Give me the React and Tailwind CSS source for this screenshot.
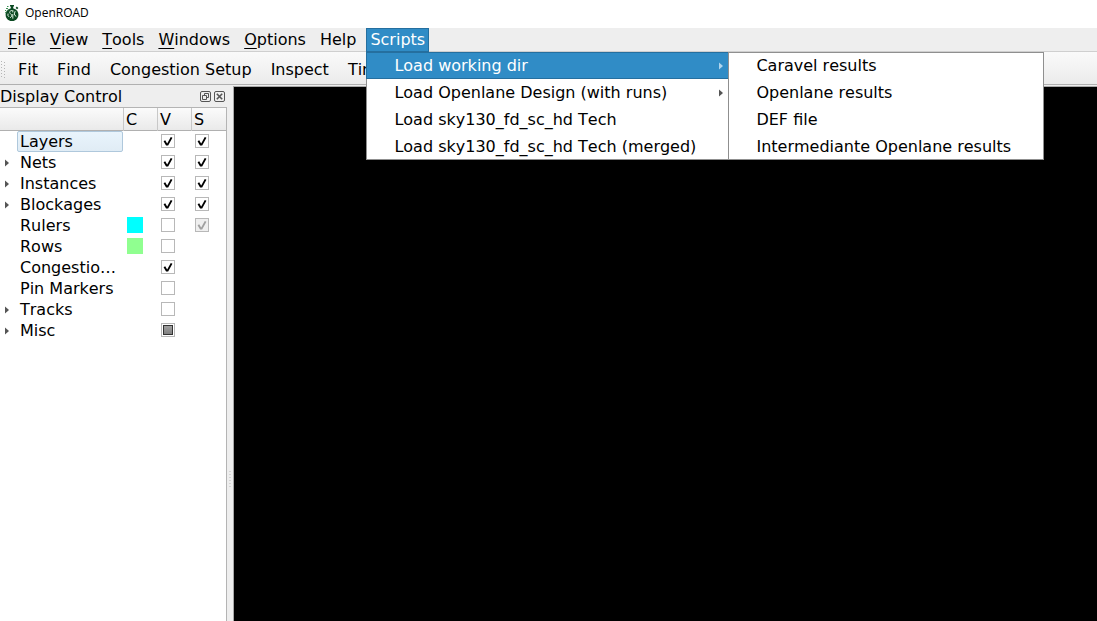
import React from "react";

const menus = ["File", "View", "Tools", "Windows", "Options"];
const tools = ["Fit", "Find", "Congestion Setup", "Inspect", "Timing"];
const scripts = [
  { label: "Load working dir", sub: true, active: true },
  { label: "Load Openlane Design (with runs)", sub: true },
  { label: "Load sky130_fd_sc_hd Tech" },
  { label: "Load sky130_fd_sc_hd Tech (merged)" },
];
const workingDir = ["Caravel results", "Openlane results", "DEF file", "Intermediante Openlane results"];
const rows = [
  { name: "Layers", selected: true, v: "on", s: "on" },
  { name: "Nets", tree: true, v: "on", s: "on" },
  { name: "Instances", tree: true, v: "on", s: "on" },
  { name: "Blockages", tree: true, v: "on", s: "on" },
  { name: "Rulers", color: "bg-[#00ffff]", v: "off", s: "disabled" },
  { name: "Rows", color: "bg-[#90ff90]", v: "off" },
  { name: "Congestion Map", v: "on" },
  { name: "Pin Markers", v: "off" },
  { name: "Tracks", tree: true, v: "off" },
  { name: "Misc", tree: true, v: "partial" },
];

function Arrow({ className }) {
  return (
    <svg viewBox="0 0 4 8" className={"h-2 w-1 shrink-0 " + className} aria-hidden="true">
      <path d="M0 0.5L4 4L0 7.5Z" fill="currentColor" />
    </svg>
  );
}

function Check({ state, label }) {
  const disabled = state === "disabled";
  return (
    <span className="ml-1 grid h-5 w-3.5 place-items-center">
      <input
        type="checkbox"
        aria-label={label}
        defaultChecked={state === "on" || disabled}
        disabled={disabled}
        ref={(el) => {
          if (el) el.indeterminate = state === "partial";
        }}
        className={
          "peer col-start-1 row-start-1 size-3.5 appearance-none border border-[#b8b8b8] " +
          (disabled ? "bg-[#efefef]" : "bg-white")
        }
      />
      <svg
        viewBox="0 0 14 14"
        className={
          "pointer-events-none col-start-1 row-start-1 hidden size-3.5 peer-checked:block peer-indeterminate:hidden " +
          (disabled ? "text-[#a0a0a0]" : "text-black")
        }
        aria-hidden="true"
      >
        <path d="M3.4 6.8L5.6 10.6L6.6 10.6L10.6 3.4" fill="none" stroke="currentColor" strokeWidth="1.9" />
      </svg>
      <span className="pointer-events-none col-start-1 row-start-1 hidden size-2.5 border border-[#333] bg-linear-to-b from-[#a0a0a0] to-[#808080] peer-indeterminate:block" />
    </span>
  );
}

function Logo() {
  return (
    <svg viewBox="0 0 16 18" className="h-[18px] w-4" aria-hidden="true">
      <path d="M6 1h4v1.6H9.2V5H6.8V2.6H6zM11.6 4l1.2-1.4 1.6 1.4-1.2 1.3z" fill="#0b4a22" />
      <path d="M8 4.3a6.4 6.4 0 1 1-.01 0z" fill="#0b4a22" />
      <path d="M1 6.5h1M2 4.5h2M3 2.5h1.5M1 9l1.5-1M4 6.5l1-1" stroke="#3c9155" />
      <path d="M8 6.5c-2.4.2-3 2-1.4 3.3s1.6 2.6-.4 4M8.8 6v2.4M8.8 10v4.6M11.2 7.2l-1 2.8 1.8 2.6M4 9.6v2.2l1 1" fill="none" stroke="#dff1e3" strokeWidth="1" />
    </svg>
  );
}

export default function App() {
  return (
    <div className="flex h-screen flex-col overflow-hidden bg-[#eee] font-['DejaVu_Sans',sans-serif] text-base leading-5 text-black [font-kerning:none]">
      <header className="flex h-7 shrink-0 items-center gap-[5px] bg-white pr-2 pb-[3px] pl-1">
        <Logo />
        <h1 className="font-['Open_Sans','Noto_Sans',sans-serif] text-xs">OpenROAD</h1>
      </header>

      <nav className="flex h-6 shrink-0 gap-1.5 border-b border-[#cfcfcf] pl-1" aria-label="Main menu">
        {menus.map((m) => (
          <button key={m} type="button" className="px-1">
            <span className="underline decoration-1 underline-offset-3">{m[0]}</span>
            {m.slice(1)}
          </button>
        ))}
        <button type="button" className="px-1">Help</button>
        <div className="relative h-6">
          <button type="button" aria-expanded="true" className="h-6 border border-[#256f9f] bg-[#308cc6] px-[3px] text-white">
            Scripts
          </button>
          <div className="absolute top-full left-0 z-10 flex">
            <ul className="w-[362px] border border-r-0 border-[#8f8f8f] bg-white">
              {scripts.map((s) => (
                <li key={s.label} className="-mx-px first:-mt-px last:-mb-px">
                  <button
                    type="button"
                    className={
                      "flex h-[27px] w-full items-center justify-between pr-1.5 pl-7 text-left whitespace-nowrap " +
                      (s.active ? "bg-[#308cc6] text-white shadow-[inset_0_0_0_1px_#256f9f]" : "")
                    }
                  >
                    {s.label}
                    {s.sub && <Arrow className={s.active ? "text-[#b0d5ed]" : "text-[#555]"} />}
                  </button>
                </li>
              ))}
            </ul>
            <ul className="w-[316px] border border-[#8f8f8f] bg-white">
              {workingDir.map((s) => (
                <li key={s} className="-mx-px first:-mt-px last:-mb-px">
                  <button type="button" className="flex h-[27px] w-full items-center pl-7 text-left whitespace-nowrap">
                    {s}
                  </button>
                </li>
              ))}
            </ul>
          </div>
        </div>
      </nav>

      <div className="flex h-[33px] shrink-0 items-center gap-[19px] border-b border-[#b0b0b0] bg-linear-to-b from-[#fafafa] to-[#ebebeb] pt-[3px] pl-px" role="toolbar">
        <svg viewBox="0 0 5 18" className="-mr-[7px] h-[18px] w-[5px]" aria-hidden="true">
          <path d="M.5 0v18M3.5 1v17" stroke="#b5b5b5" strokeDasharray="1 2" />
        </svg>
        {tools.map((t) => (
          <button key={t} type="button" className="whitespace-nowrap">{t}</button>
        ))}
      </div>

      <div className="flex min-h-0 flex-1 pt-px">
        <aside className="flex w-[227px] shrink-0 flex-col">
          <div className="flex h-[21px] items-center justify-between pr-0.5">
            <h2>Display Control</h2>
            <div className="flex gap-[3px] text-[#555]">
              <button type="button" aria-label="Float">
                <svg viewBox="0 0 11 11" className="size-[11px]" fill="none" stroke="currentColor" aria-hidden="true">
                  <rect x=".5" y=".5" width="10" height="10" rx="1.5" />
                  <path d="M4.5 4.5v-2h4v4h-2M2.5 4.5h4v4h-4z" />
                </svg>
              </button>
              <button type="button" aria-label="Close">
                <svg viewBox="0 0 11 11" className="size-[11px]" fill="none" stroke="currentColor" aria-hidden="true">
                  <rect x=".5" y=".5" width="10" height="10" rx="1.5" />
                  <path d="M2.8 2.8l5.4 5.4M8.2 2.8l-5.4 5.4" strokeWidth="1.6" />
                </svg>
              </button>
            </div>
          </div>
          <div className="min-h-0 flex-1 border-t border-r border-[#b4b4b4] bg-white">
            <table className="w-full table-fixed border-collapse text-left">
              <colgroup>
                <col />
                <col className="w-[34px]" />
                <col className="w-[34px]" />
                <col className="w-[35px]" />
              </colgroup>
              <thead>
                <tr className="h-[23px] bg-linear-to-b from-[#fbfbfb] to-[#e9e9e9] shadow-[inset_0_-1px_0_#b0b0b0]">
                  <th className="p-0" aria-label="Name" />
                  {["C", "V", "S"].map((c) => (
                    <th key={c} className="p-0 pl-[3px] font-normal shadow-[inset_1px_0_0_#c8c8c8]">{c}</th>
                  ))}
                </tr>
              </thead>
              <tbody>
                {rows.map((r) => (
                  <tr key={r.name} className="h-[21px] align-top">
                    <td className="p-0">
                      <div className="flex h-[21px] items-center">
                        <span className="flex w-[17px] shrink-0 pl-[5px]">
                          {r.tree && <Arrow className="text-[#555]" />}
                        </span>
                        <span
                          className={
                            "h-[21px] min-w-0 flex-1 truncate rounded-xs border pl-0.5 " +
                            (r.selected ? "border-[#afc8dc] bg-linear-to-b from-[#e9f4fc] to-[#e0ecf5]" : "border-transparent")
                          }
                        >
                          {r.name}
                        </span>
                      </div>
                    </td>
                    <td className="p-0 pt-0.5">{r.color && <span className={"ml-1 block size-4 " + r.color} />}</td>
                    <td className="p-0">{r.v && <Check state={r.v} label={r.name + " visible"} />}</td>
                    <td className="p-0">{r.s && <Check state={r.s} label={r.name + " selectable"} />}</td>
                  </tr>
                ))}
              </tbody>
            </table>
          </div>
        </aside>
        <div className="flex w-1.5 shrink-0 items-center justify-center pt-[250px]" role="separator">
          <svg viewBox="0 0 2 18" className="h-[18px] w-0.5" aria-hidden="true">
            <path d="M1 1v17" stroke="#b8b8b8" strokeDasharray="1 2" />
          </svg>
        </div>
        <main className="min-w-0 flex-1 border-t border-l border-[#a8a8a8] bg-black" />
      </div>
    </div>
  );
}
